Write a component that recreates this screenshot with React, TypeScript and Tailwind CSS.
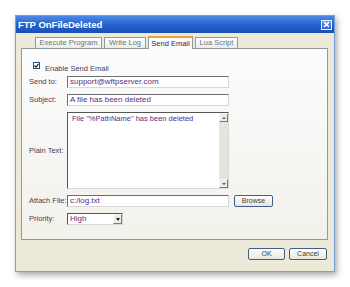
import React from "react"

const font = { fontFamily: '"Liberation Sans", Arial, sans-serif' }

function TextInput({ value, className = "" }: { value: string; className?: string }) {
  return (
    <div
      className={`h-[12px] w-[162px] bg-white border border-t-[#6f6f6f] border-l-[#6f6f6f] border-b-[#d8d8d8] border-r-[#d8d8d8] pl-[2px] text-[8px] leading-[10px] text-[#5b2d86] whitespace-nowrap ${className}`}
    >
      {value}
    </div>
  )
}

function Tab({ label, w, active }: { label: string; w: string; active?: boolean }) {
  if (active) {
    return (
      <div className={`${w} relative -mb-px z-10 h-[13px] bg-[#fcfcfe] border border-[#919b9c] border-b-0 border-t-2 border-t-[#f0a030] text-[7.5px] leading-[10px] text-[#3a2050] flex items-center justify-center whitespace-nowrap`}>
        {label}
      </div>
    )
  }
  return (
    <div className={`${w} h-[11px] mt-[1px] bg-gradient-to-b from-[#ffffff] to-[#ecebe6] border border-[#919b9c] border-b-0 text-[7.5px] leading-[10px] text-[#6a7288] flex items-center justify-center whitespace-nowrap`}>
      {label}
    </div>
  )
}

function XpButton({ label, w }: { label: string; w: string }) {
  return (
    <div
      className={`${w} h-[12px] rounded-[2px] border border-[#3f5f86] bg-gradient-to-b from-[#ffffff] to-[#e8e6dc] text-[7px] leading-[10px] text-[#404040] flex items-center justify-center`}
    >
      {label}
    </div>
  )
}

export default function App() {
  return (
    <div className="w-[350px] h-[287px] bg-white pt-[15px] pl-[15px]" style={font}>
      <div className="w-[320px] h-[257px] flex flex-col bg-[#ece9d8] border border-[#7aa0d8] shadow-[2px_3px_6px_rgba(0,0,0,0.35)]">
        {/* Title bar */}
        <div className="h-[17px] flex items-center justify-between pl-[2px] pr-[2px] bg-gradient-to-b from-[#4d8ae6] via-[#2563cf] to-[#1b4fb2]">
          <span className="text-[9.5px] font-bold text-white leading-none">FTP OnFileDeleted</span>
          <div className="w-[11px] h-[10px] border border-white/90 bg-gradient-to-b from-[#6a9ae8] to-[#2d5fc0] flex items-center justify-center">
            <svg width="7" height="7" viewBox="0 0 7 7">
              <path d="M1 1 L6 6 M6 1 L1 6" stroke="white" strokeWidth="1.6" />
            </svg>
          </div>
        </div>

        {/* Tabs */}
        <div className="flex items-end gap-[2px] pl-[19px] mt-[3px]">
          <Tab label="Execute Program" w="w-[67px]" />
          <Tab label="Write Log" w="w-[42px]" />
          <Tab label="Send Email" w="w-[45px]" active />
          <Tab label="Lua Script" w="w-[43px]" />
        </div>

        {/* Panel */}
        <div className="ml-[5px] w-[307px] h-[192px] border border-[#919b9c] bg-gradient-to-b from-[#fcfcfe] to-[#f2f1ea] flex flex-col pl-[7px]">
          <div className="mt-[13px] flex items-start ml-[4px]">
            <div className="w-[7px] h-[7px] bg-white border border-[#1c5180] flex items-center justify-center">
              <svg width="5" height="5" viewBox="0 0 5 5">
                <path d="M0.5 2.5 L2 4 L4.5 0.8" stroke="#222" strokeWidth="1.2" fill="none" />
              </svg>
            </div>
            <span className="ml-[5px] mt-[2px] text-[7.5px] leading-[10px] text-[#4a3a5e]">Enable Send Email</span>
          </div>

          <div className="mt-[2px] grid grid-cols-[38px_162px_auto] gap-y-[6px] items-center text-[7.5px] leading-[10px] text-[#4a3a5e]">
            <span className="whitespace-nowrap">Send to:</span>
            <TextInput value="support@wftpserver.com" />
            <span />

            <span className="whitespace-nowrap">Subject:</span>
            <TextInput value="A file has been deleted" />
            <span />

            <span className="whitespace-nowrap">Plain Text:</span>
            <div className="h-[77px] w-[162px] flex bg-white border border-t-[#555] border-l-[#555] border-b-[#d8d8d8] border-r-[#d8d8d8]">
              <div className="flex-1 pl-[4px] pt-[1px] text-[#5b2d86]">File "%PathName" has been deleted</div>
              <div className="w-[9px] bg-[#e4e3dc] flex flex-col justify-between">
                <div className="h-[9px] bg-[#ecebe4] border border-[#7a7a7a] border-t-[#f8f8f8] border-l-[#f8f8f8] flex items-center justify-center">
                  <div className="w-0 h-0 border-l-[2px] border-r-[2px] border-b-[2px] border-l-transparent border-r-transparent border-b-[#606060]" />
                </div>
                <div className="h-[9px] bg-[#ecebe4] border border-[#7a7a7a] border-t-[#f8f8f8] border-l-[#f8f8f8] flex items-center justify-center">
                  <div className="w-0 h-0 border-l-[2px] border-r-[2px] border-t-[2px] border-l-transparent border-r-transparent border-t-[#606060]" />
                </div>
              </div>
            </div>
            <span />

            <span className="whitespace-nowrap">Attach File:</span>
            <TextInput value="c:/log.txt" />
            <div className="ml-[5px]">
              <XpButton label="Browse" w="w-[39px]" />
            </div>

            <span className="whitespace-nowrap">Priority:</span>
            <div className="h-[12px] w-[56px] flex bg-white border border-t-[#555] border-l-[#555] border-b-[#d8d8d8] border-r-[#d8d8d8]">
              <span className="flex-1 pl-[2px] text-[8px] text-[#5b2d86] leading-[10px]">High</span>
              <div className="w-[9px] bg-[#ecebe4] border border-[#7a7a7a] border-t-[#f8f8f8] border-l-[#f8f8f8] flex items-center justify-center">
                <div className="w-0 h-0 border-l-[2.5px] border-r-[2.5px] border-t-[3px] border-l-transparent border-r-transparent border-t-[#202020]" />
              </div>
            </div>
            <span />
          </div>
        </div>

        {/* Buttons */}
        <div className="flex justify-end gap-[4px] pr-[7px] mt-[8px]">
          <XpButton label="OK" w="w-[37px]" />
          <XpButton label="Cancel" w="w-[38px]" />
        </div>
      </div>
    </div>
  )
}
